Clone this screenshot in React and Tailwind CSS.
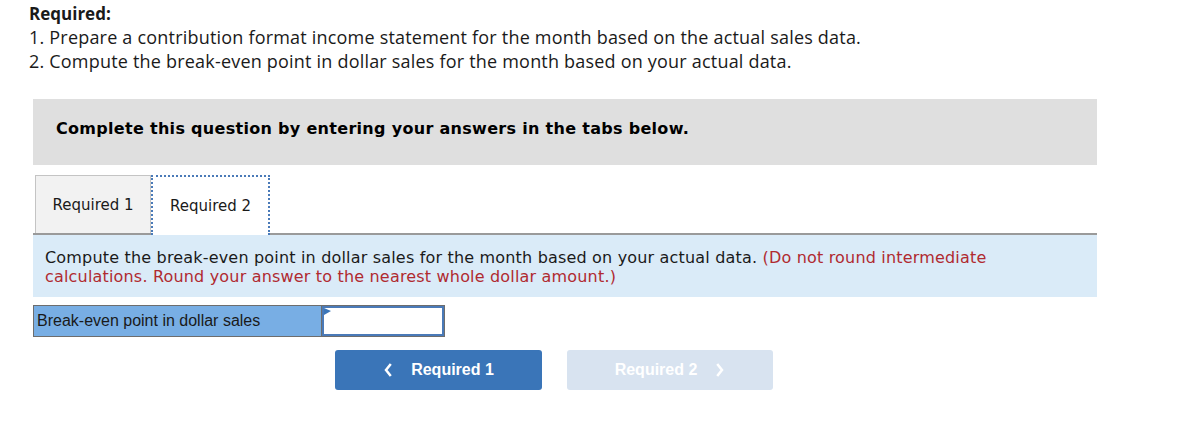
export default function App() {
  return (
    <div className="w-[1184px] h-[445px] bg-white relative overflow-hidden">
      <div className="pl-[29px] pt-[3px] font-['Open_Sans',sans-serif] text-[18px] tracking-[0.2px] leading-[24px] text-[#1a1a1a]">
        <div className="font-bold tracking-normal text-[17px] leading-[22px]">Required:</div>
        <div>1. Prepare a contribution format income statement for the month based on the actual sales data.</div>
        <div>2. Compute the break-even point in dollar sales for the month based on your actual data.</div>
      </div>

      <div className="ml-[33px] w-[1064px] mt-[26px]">
        <div className="h-[66px] bg-[#dfdfdf] flex items-center pl-[23px] pb-[7px] font-['DejaVu_Sans',Verdana,sans-serif] font-bold text-[16px] tracking-[0.3px] text-black">
          Complete this question by entering your answers in the tabs below.
        </div>

        <div className="mt-[10px] flex items-end border-b-2 border-[#9a9a9a]">
          <div className="ml-[2px] w-[116px] h-[58px] bg-[#f2f2f2] border border-b-0 border-[#c4c4c4] flex items-center justify-center pt-[2px] font-['DejaVu_Sans',Tahoma,sans-serif] text-[15px] text-[#1a1a1a]">
            Required 1
          </div>
          <div className="w-[119px] h-[60px] -mb-[2px] bg-white border-2 border-b-0 border-dotted border-[#4a7ab8] flex items-center justify-center font-['DejaVu_Sans',Tahoma,sans-serif] text-[15px] text-[#1a1a1a]">
            Required 2
          </div>
        </div>

        <div className="h-[62px] bg-[#daebf8] pl-[12px] pt-[13px] pr-[100px] font-['DejaVu_Sans',Verdana,sans-serif] text-[16px] tracking-[0.18px] leading-[19px] text-[#1a1a1a]">
          Compute the break-even point in dollar sales for the month based on your actual data.{" "}
          <span className="text-[#b02a30]">(Do not round intermediate calculations. Round your answer to the nearest whole dollar amount.)</span>
        </div>

        <div className="mt-[8px] flex h-[32px] w-[412px] border border-[#6d6d6d]">
          <div className="w-[288px] bg-[#78aee4] border-r border-[#6d6d6d] flex items-center pl-[3px] font-['Liberation_Sans',Arial,sans-serif] text-[16px] text-[#1a1a1a]">
            Break-even point in dollar sales
          </div>
          <div className="relative flex-1 bg-white border-2 border-[#4a7ab8] m-0">
            <svg className="absolute left-0 top-0" width="8" height="8" viewBox="0 0 8 8">
              <polygon points="0,0 7,3 0,7" fill="#3b76b9" />
            </svg>
          </div>
        </div>

        <div className="mt-[13px] flex gap-[25px] pl-[302px] font-['Liberation_Sans',Arial,sans-serif] font-bold text-[16px] text-white">
          <div className="w-[207px] h-[40px] rounded-[3px] bg-[#3a75b8] flex items-center justify-center gap-[18px]">
            <svg width="10" height="14" viewBox="0 0 10 14" fill="none" stroke="white" strokeWidth="2.5" strokeLinecap="square">
              <polyline points="7,2 3,7 7,12" />
            </svg>
            <span>Required 1</span>
          </div>
          <div className="w-[206px] h-[40px] rounded-[3px] bg-[#d8e3f0] flex items-center justify-center gap-[18px]">
            <span>Required 2</span>
            <svg width="10" height="14" viewBox="0 0 10 14" fill="none" stroke="white" strokeWidth="2.5" strokeLinecap="square">
              <polyline points="3,2 7,7 3,12" />
            </svg>
          </div>
        </div>
      </div>
    </div>
  );
}
